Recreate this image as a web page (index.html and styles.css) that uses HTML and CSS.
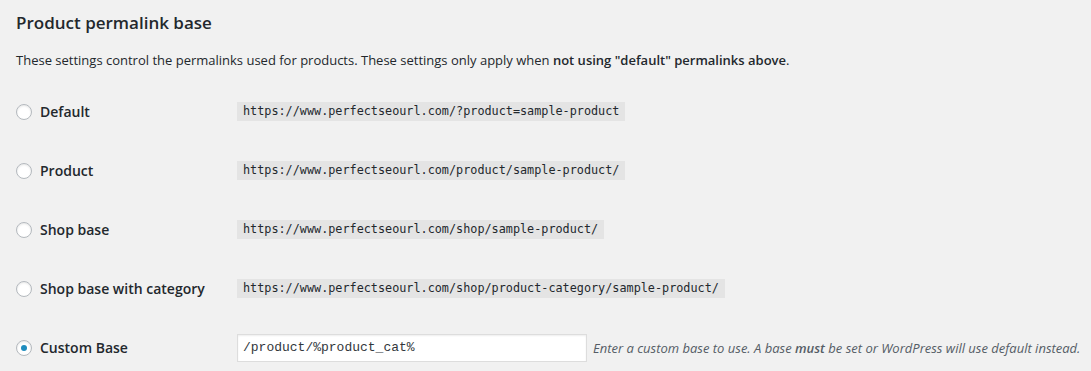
FILE: index.html
```html
<!DOCTYPE html>
<html lang="en">
<head>
    <meta charset="UTF-8">
    <meta name="viewport" content="width=device-width, initial-scale=1.0">
    <title>Permalink settings</title>
<link rel="stylesheet" href="styles.css">
</head>
<body>
<div class="wrap">
    <h2 class="title">Product permalink base</h2>
    <p class="intro">These settings control the permalinks used for products. These settings only apply when <strong>not using "default" permalinks above</strong>.</p>

    <div class="permalinkTable">
        <label class="option"><input type="radio" name="base"> Default</label>
        <div class="value"><code>https://www.perfectseourl.com/?product=sample-product</code></div>

        <label class="option"><input type="radio" name="base"> Product</label>
        <div class="value"><code>https://www.perfectseourl.com/product/sample-product/</code></div>

        <label class="option"><input type="radio" name="base"> Shop base</label>
        <div class="value"><code>https://www.perfectseourl.com/shop/sample-product/</code></div>

        <label class="option"><input type="radio" name="base"> Shop base with category</label>
        <div class="value"><code>https://www.perfectseourl.com/shop/product-category/sample-product/</code></div>

        <label class="option"><input type="radio" name="base" checked> Custom Base</label>
        <div class="value">
            <input class="baseInput" type="text" value="/product/%product_cat%">
            <span class="description">Enter a custom base to use. A base <strong>must</strong> be set or WordPress will use default instead.</span>
        </div>
    </div>
</div>
</body>
</html>
```

FILE: styles.css
```css
body{
    margin: 0;
    background-color: #f1f1f1;
    color: #23282d;
    font-family: "Open Sans", sans-serif;
    font-size: 13px;
}
.wrap{
    padding: 0 16px;
}
.title{
    font-size: 17px;
    font-weight: 600;
    line-height: 22px;
    margin: 12px 0 0;
}
.intro{
    margin: 16px 0 0;
    line-height: 20px;
}
.intro strong{
    font-weight: 600;
}
.permalinkTable{
    margin-top: 12px;
    display: grid;
    grid-template-columns: 221px auto;
    grid-auto-rows: 59px;
    align-items: center;
}
.option{
    display: flex;
    align-items: center;
    font-size: 14px;
    font-weight: 600;
    line-height: 20px;
}
.option input{
    appearance: none;
    width: 16px;
    height: 16px;
    margin: 0 8px 0 0;
    border: 1px solid #b4b9be;
    border-radius: 50%;
    background-color: #fff;
    box-shadow: inset 0 1px 2px rgba(0, 0, 0, 0.1);
    display: flex;
    align-items: center;
    justify-content: center;
}
.option input:checked::before{
    content: "";
    width: 6px;
    height: 6px;
    border-radius: 50%;
    background-color: #1e8cbe;
}
.value{
    display: flex;
    align-items: center;
}
.value code{
    font-family: "DejaVu Sans Mono", monospace;
    font-size: 11.8px;
    line-height: 15px;
    padding: 2px 6px 2px 6px;
    background-color: #e4e4e4;
    color: #23282d;
}
.baseInput{
    box-sizing: border-box;
    flex-shrink: 0;
    width: 350px;
    height: 28px;
    padding: 0 5px;
    border: 1px solid #ddd;
    box-shadow: inset 0 1px 2px rgba(0, 0, 0, 0.07);
    background-color: #fff;
    font-family: "Liberation Mono", monospace;
    font-size: 13px;
    color: #32373c;
    outline: none;
}
.description{
    margin-left: 6px;
    white-space: nowrap;
    font-style: italic;
    color: #555d66;
}
.description strong{
    font-weight: 600;
}
```
